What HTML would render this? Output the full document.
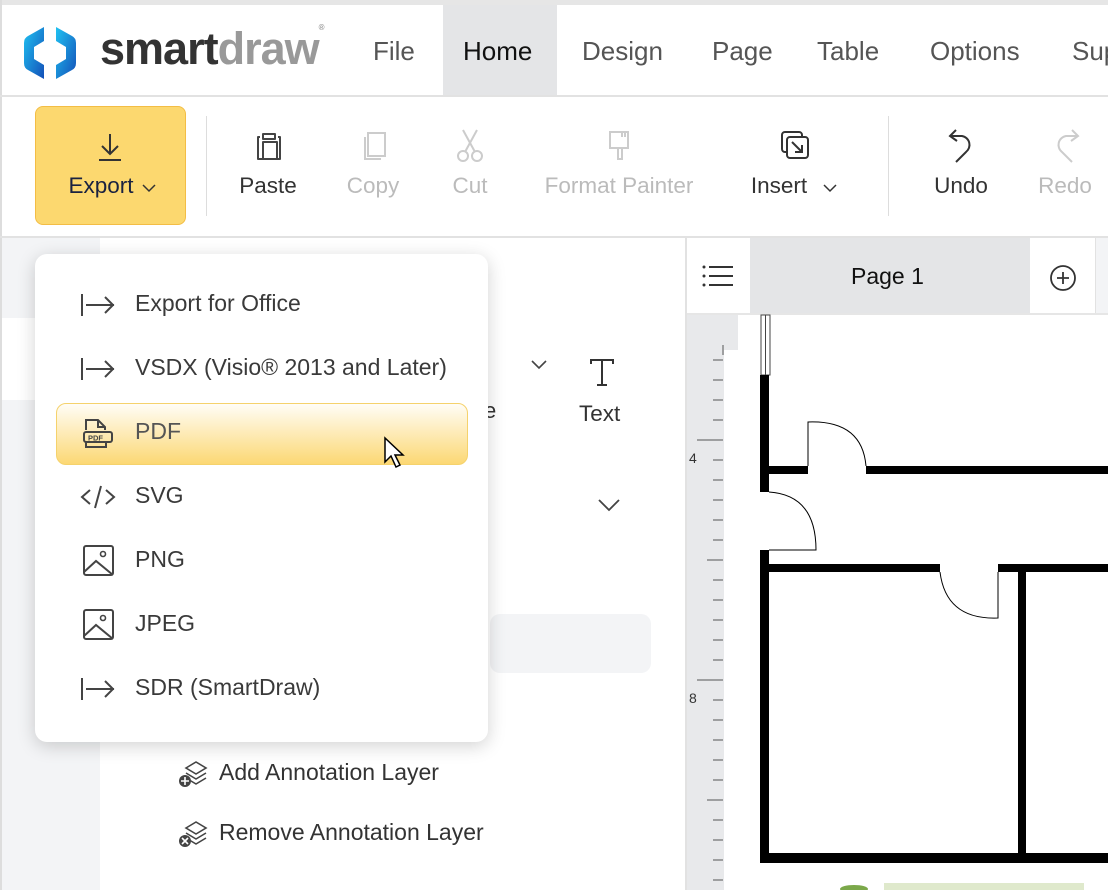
<!DOCTYPE html>
<html><head><meta charset="utf-8"><style>
*{margin:0;padding:0;box-sizing:border-box}
body{width:1108px;height:890px;overflow:hidden;background:#fff;font-family:"Liberation Sans",sans-serif;position:relative;color:#333}
.a{position:absolute}
.nav{position:absolute;top:36px;font-size:26px;color:#555}
.tb{position:absolute;top:173px;font-size:22.5px;color:#333;transform:translateX(-50%);white-space:nowrap}
.dis{color:#bbb}
.mi{position:absolute;left:135px;font-size:23px;color:#3a3a3a}
.ic{position:absolute;left:80px}
svg{overflow:visible}
</style></head><body>
<div class="a" style="left:0;top:0;width:1108px;height:5px;background:#e6e6e6"></div>
<div class="a" style="left:0;top:0;width:2px;height:890px;background:#ddd"></div>
<div class="a" style="left:443px;top:5px;width:114px;height:91px;background:#e4e5e7"></div>
<svg class="a" style="left:22px;top:25px" width="56" height="56" viewBox="0 0 56 56">
<defs><linearGradient id="g" x1="0" y1="0" x2="1" y2="1"><stop offset="0" stop-color="#1fc2f2"/><stop offset="1" stop-color="#1450b8"/></linearGradient></defs>
<path d="M22 2 L6 11 Q2 13 2 18 L2 38 Q2 43 6 45 L22 54 L22 40 L12 34 L12 22 L22 16 Z" fill="url(#g)"/>
<path d="M34 2 L50 11 Q54 13 54 18 L54 38 Q54 43 50 45 L34 54 L34 40 L44 34 L44 22 L34 16 Z" fill="url(#g)"/>
</svg>
<div class="a" style="left:100px;top:23px;font-size:45px;font-weight:bold;letter-spacing:-1px"><span style="color:#333">smart</span><span style="color:#999">draw</span><span style="font-size:8px;color:#999;vertical-align:top">®</span></div>
<div class="nav" style="left:373px">File</div>
<div class="nav" style="left:463px;color:#111">Home</div>
<div class="nav" style="left:582px">Design</div>
<div class="nav" style="left:712px">Page</div>
<div class="nav" style="left:817px">Table</div>
<div class="nav" style="left:930px">Options</div>
<div class="nav" style="left:1072px">Sup</div>
<div class="a" style="left:0;top:95px;width:1108px;height:2px;background:#e2e2e2"></div>
<div class="a" style="left:35px;top:106px;width:151px;height:119px;background:#fcd86f;border:1px solid #f3bd45;border-radius:8px"></div>
<svg class="a" style="left:97px;top:132px" width="26" height="30"><path d="M13 2V22M5 14l8 8 8-8M2 28H24" stroke="#333" stroke-width="2" fill="none"/></svg>
<div class="tb" style="left:101px;color:#1a2240">Export</div>
<svg class="a" style="left:141px;top:183px" width="16" height="10"><path d="M2 2l6 6 6-6" stroke="#333" stroke-width="1.5" fill="none"/></svg>
<div class="a" style="left:206px;top:116px;width:1px;height:100px;background:#ddd"></div>
<svg class="a" style="left:254px;top:130px" width="30" height="32"><path d="M9 4h12v5H9z M6 7H4v22h22V7h-2 M9 12h14v17H9z" stroke="#444" stroke-width="2" fill="none" stroke-linejoin="round"/></svg>
<div class="tb" style="left:268px">Paste</div>
<svg class="a" style="left:359px;top:130px" width="30" height="32"><path d="M9 3h17v23H9z M6 7v22h16" stroke="#ccc" stroke-width="2" fill="none"/></svg>
<div class="tb dis" style="left:373px">Copy</div>
<svg class="a" style="left:455px;top:128px" width="30" height="34"><path d="M8 2l12 22M22 2L10 24" stroke="#ccc" stroke-width="2"/><circle cx="8" cy="28" r="5" stroke="#ccc" stroke-width="2" fill="none"/><circle cx="22" cy="28" r="5" stroke="#ccc" stroke-width="2" fill="none"/></svg>
<div class="tb dis" style="left:470px">Cut</div>
<svg class="a" style="left:606px;top:130px" width="28" height="32"><path d="M4 2h18v16H4z M12 18v11h4V18 M16 2v5M19 2v5" stroke="#ccc" stroke-width="2" fill="none"/></svg>
<div class="tb dis" style="left:619px">Format Painter</div>
<svg class="a" style="left:780px;top:130px" width="32" height="32"><rect x="2" y="2" width="20" height="20" rx="3" stroke="#333" stroke-width="2" fill="none"/><rect x="7" y="7" width="21" height="21" rx="3" stroke="#333" stroke-width="2" fill="#fff"/><path d="M12 12l10 10M22 15v7h-7" stroke="#333" stroke-width="2" fill="none"/></svg>
<div class="tb" style="left:779px">Insert</div>
<svg class="a" style="left:822px;top:183px" width="16" height="10"><path d="M2 2l6 6 6-6" stroke="#333" stroke-width="1.5" fill="none"/></svg>
<div class="a" style="left:888px;top:116px;width:1px;height:100px;background:#ddd"></div>
<svg class="a" style="left:946px;top:128px" width="32" height="36"><path d="M10 2L4 8l7 5M4 8h12a9 9 0 0 1 4 16l-10 10" stroke="#333" stroke-width="2" fill="none"/></svg>
<div class="tb" style="left:961px">Undo</div>
<svg class="a" style="left:1050px;top:128px" width="32" height="36"><path d="M22 2l6 6-7 5M28 8H16a9 9 0 0 0-4 16l10 10" stroke="#ccc" stroke-width="2" fill="none"/></svg>
<div class="tb dis" style="left:1065px">Redo</div>
<div class="a" style="left:0;top:236px;width:1108px;height:2px;background:#e2e2e2"></div>
<div class="a" style="left:2px;top:238px;width:98px;height:652px;background:#f3f4f6"></div>
<div class="a" style="left:2px;top:318px;width:98px;height:82px;background:#fff"></div>
<div class="a" style="left:490px;top:614px;width:161px;height:59px;background:#f3f4f6;border-radius:10px"></div>
<div class="a" style="left:484px;top:398px;font-size:22px">e</div>
<svg class="a" style="left:530px;top:359px" width="18" height="10"><path d="M2 2l7 7 7-7" stroke="#444" stroke-width="1.6" fill="none"/></svg>
<svg class="a" style="left:589px;top:358px" width="26" height="28"><path d="M2 6V2h22v4M13 2v25M8 27h10" stroke="#333" stroke-width="2" fill="none"/></svg>
<div class="a" style="left:579px;top:401px;font-size:22.5px">Text</div>
<svg class="a" style="left:597px;top:498px" width="24" height="14"><path d="M2 2l10 10 10-10" stroke="#444" stroke-width="1.8" fill="none"/></svg>
<svg class="a" style="left:178px;top:760px" width="30" height="28"><path d="M8 8l10-6 10 6-10 6z M8 13l10 6 10-6M8 18l10 6 10-6" stroke="#444" stroke-width="1.6" fill="none"/><circle cx="7" cy="21" r="6" fill="#444"/><path d="M7 17v8M3 21h8" stroke="#fff" stroke-width="1.6"/></svg>
<div class="a" style="left:219px;top:759px;font-size:23px">Add Annotation Layer</div>
<svg class="a" style="left:178px;top:820px" width="30" height="28"><path d="M8 8l10-6 10 6-10 6z M8 13l10 6 10-6M8 18l10 6 10-6" stroke="#444" stroke-width="1.6" fill="none"/><circle cx="7" cy="21" r="6" fill="#444"/><path d="M4 18l6 6M10 18l-6 6" stroke="#fff" stroke-width="1.6"/></svg>
<div class="a" style="left:219px;top:819px;font-size:23px">Remove Annotation Layer</div>
<div class="a" style="left:685px;top:238px;width:2px;height:652px;background:#e2e2e2"></div>
<div class="a" style="left:750px;top:238px;width:280px;height:75px;background:#e4e5e7"></div>
<div class="a" style="left:1095px;top:238px;width:13px;height:75px;background:#f3f4f6;border-left:1px solid #e2e2e2"></div>
<svg class="a" style="left:702px;top:264px" width="32" height="24"><circle cx="2" cy="3" r="1.5" fill="#333"/><circle cx="2" cy="12" r="1.5" fill="#333"/><circle cx="2" cy="21" r="1.5" fill="#333"/><path d="M7 3h24M7 12h24M7 21h24" stroke="#333" stroke-width="2"/></svg>
<div class="a" style="left:851px;top:263px;font-size:23px;color:#111">Page 1</div>
<svg class="a" style="left:1049px;top:264px" width="28" height="28"><circle cx="14" cy="14" r="12" stroke="#333" stroke-width="1.8" fill="none"/><path d="M14 8v12M8 14h12" stroke="#333" stroke-width="1.8"/></svg>
<div class="a" style="left:687px;top:313px;width:421px;height:2px;background:#e6e6e6"></div>
<div class="a" style="left:687px;top:315px;width:37px;height:575px;background:#e8e9eb"></div>
<div class="a" style="left:724px;top:315px;width:14px;height:35px;background:#e8e9eb"></div>
<svg class="a" style="left:687px;top:315px" width="40" height="575">
<g stroke="#555" stroke-width="1">
<path d="M26 45H36M26 65H36M26 85H36M26 105H36M10 125H36M26 145H36M26 165H36M26 185H36M26 205H36M26 225H36M20 245H36M26 265H36M26 285H36M26 305H36M26 325H36M26 345H36M10 365H36M26 385H36M26 405H36M26 425H36M26 445H36M26 465H36M20 485H36M26 505H36M26 525H36M26 545H36M26 565H36"/>
<path d="M36 30V40"/>
</g>
<text x="2" y="148" font-size="14" fill="#333" font-family="Liberation Sans">4</text>
<text x="2" y="388" font-size="14" fill="#333" font-family="Liberation Sans">8</text>
</svg>
<svg class="a" style="left:724px;top:315px" width="384" height="575">
<rect x="37" y="0" width="9" height="60" fill="#fff" stroke="#444" stroke-width="1"/>
<line x1="41.5" y1="0" x2="41.5" y2="60" stroke="#444"/>
<rect x="36" y="60" width="9" height="117" fill="#000"/>
<rect x="44" y="151" width="40" height="8" fill="#000"/>
<rect x="142" y="151" width="250" height="8" fill="#000"/>
<path d="M84 151V107Q138 105 142 151" stroke="#000" fill="none"/>
<path d="M45 177Q92 180 92 235H45" stroke="#000" fill="none"/>
<rect x="36" y="235" width="9" height="313" fill="#000"/>
<rect x="44" y="249" width="172" height="8" fill="#000"/>
<rect x="274" y="249" width="110" height="8" fill="#000"/>
<path d="M216 257Q222 305 274 303V257" stroke="#000" fill="none"/>
<rect x="294" y="257" width="8" height="288" fill="#000"/>
<rect x="36" y="538" width="350" height="10" fill="#000"/>
<rect x="160" y="568" width="200" height="10" fill="#dfe9cc"/>
<ellipse cx="130" cy="574" rx="14" ry="4" fill="#7ba84a"/>
</svg>
<div class="a" style="left:35px;top:254px;width:453px;height:488px;background:#fff;border-radius:12px;box-shadow:0 4px 18px rgba(0,0,0,0.18)"></div>
<div class="a" style="left:56px;top:403px;width:412px;height:62px;border-radius:10px;border:1px solid #f5d26c;background:linear-gradient(#fffdf6,#fcd874)"></div>
<svg class="ic" style="top:292px" width="36" height="26"><path d="M2 2v22M6 13h28M25 5l8 8-8 8" stroke="#444" stroke-width="2" fill="none"/></svg>
<div class="mi" style="top:290px">Export for Office</div>
<svg class="ic" style="top:356px" width="36" height="26"><path d="M2 2v22M6 13h28M25 5l8 8-8 8" stroke="#444" stroke-width="2" fill="none"/></svg>
<div class="mi" style="top:354px">VSDX (Visio® 2013 and Later)</div>
<svg class="ic" style="top:418px;left:83px" width="32" height="32"><path d="M3 12V2h12l7 7v3 M15 2v7h7" stroke="#444" stroke-width="2" fill="none"/><rect x="1" y="14" width="28" height="10" rx="2" stroke="#444" stroke-width="2" fill="none"/><path d="M3 24v5h20v-5" stroke="#444" stroke-width="2" fill="none"/><text x="5" y="22.5" font-size="7.5" font-weight="bold" fill="#444" font-family="Liberation Sans">PDF</text></svg>
<div class="mi" style="top:418px;color:#555">PDF</div>
<svg class="a" style="left:384px;top:437px" width="26" height="48"><path d="M1 1v24l6-6 5 11 4-2-5-10h8z" fill="#fff" stroke="#000" stroke-width="1.5"/></svg>
<svg class="ic" style="top:484px" width="36" height="26"><path d="M10 6l-8 7 8 7M26 6l8 7-8 7M21 2l-6 22" stroke="#444" stroke-width="2" fill="none"/></svg>
<div class="mi" style="top:482px">SVG</div>
<svg class="ic" style="top:545px;left:83px" width="32" height="32"><rect x="1" y="1" width="29" height="29" rx="2" stroke="#444" stroke-width="2" fill="none"/><circle cx="20" cy="9" r="2.5" stroke="#444" stroke-width="1.6" fill="none"/><path d="M1 27l12-11 17 14" stroke="#444" stroke-width="2" fill="none"/></svg>
<div class="mi" style="top:546px">PNG</div>
<svg class="ic" style="top:609px;left:83px" width="32" height="32"><rect x="1" y="1" width="29" height="29" rx="2" stroke="#444" stroke-width="2" fill="none"/><circle cx="20" cy="9" r="2.5" stroke="#444" stroke-width="1.6" fill="none"/><path d="M1 27l12-11 17 14" stroke="#444" stroke-width="2" fill="none"/></svg>
<div class="mi" style="top:610px">JPEG</div>
<svg class="ic" style="top:676px" width="36" height="26"><path d="M2 2v22M6 13h28M25 5l8 8-8 8" stroke="#444" stroke-width="2" fill="none"/></svg>
<div class="mi" style="top:674px">SDR (SmartDraw)</div>
</body></html>
